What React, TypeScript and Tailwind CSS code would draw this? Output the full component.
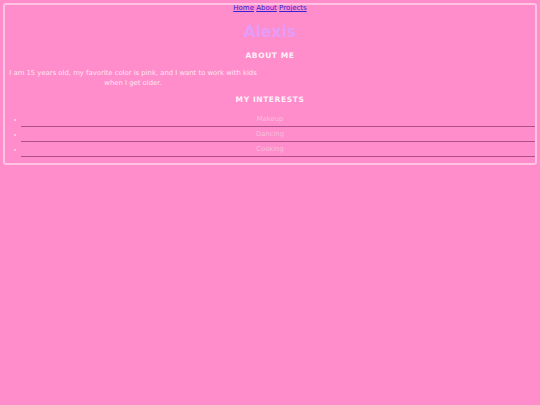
import React from 'react';

const interests = ['Makeup', 'Dancing', 'Cooking'];

export default function App() {
  return (
    <div className="min-h-screen bg-[#ff8dcc] p-[3px] font-['DejaVu_Sans',Verdana,sans-serif]">
      <div className="border-2 border-[#ffc4e4] rounded-[3px] pb-[6px]">
        <nav className="text-center text-[7px] leading-[9px] -mt-[1px] text-[#3323d6]">
          <a href="#" className="underline">Home</a>{' '}
          <a href="#" className="underline">About</a>{' '}
          <a href="#" className="underline">Projects</a>
        </nav>
        <h1 className="text-center text-[15.5px] font-bold leading-[20px] mt-[9px] text-[#e59cf7]">Alexis</h1>
        <h2 className="text-center text-[7.5px] font-bold tracking-[0.6px] leading-[10px] mt-[9px] text-[#fff2f8]">ABOUT ME</h2>
        <p className="w-[256px] text-center text-[6.85px] leading-[10px] mt-[7px] text-[#ffe4f2]">
          I am 15 years old, my favorite color is pink, and I want to work with kids when I get older.
        </p>
        <h2 className="text-center text-[7.5px] font-bold tracking-[0.6px] leading-[10px] mt-[7px] text-[#fff2f8]">MY INTERESTS</h2>
        <ul className="mt-[7px]">
          {interests.map((item) => (
            <li key={item} className="flex items-stretch">
              <span className="w-[16px] flex items-center pl-[9px]">
                <span className="block w-[2px] h-[2px] bg-[#ffc0e2]" />
              </span>
              <span className="flex-1 border-b border-[#b0508a] text-center text-[6.8px] leading-[14px] pr-[16px] text-[#f9bede]">
                {item}
              </span>
            </li>
          ))}
        </ul>
      </div>
    </div>
  );
}
